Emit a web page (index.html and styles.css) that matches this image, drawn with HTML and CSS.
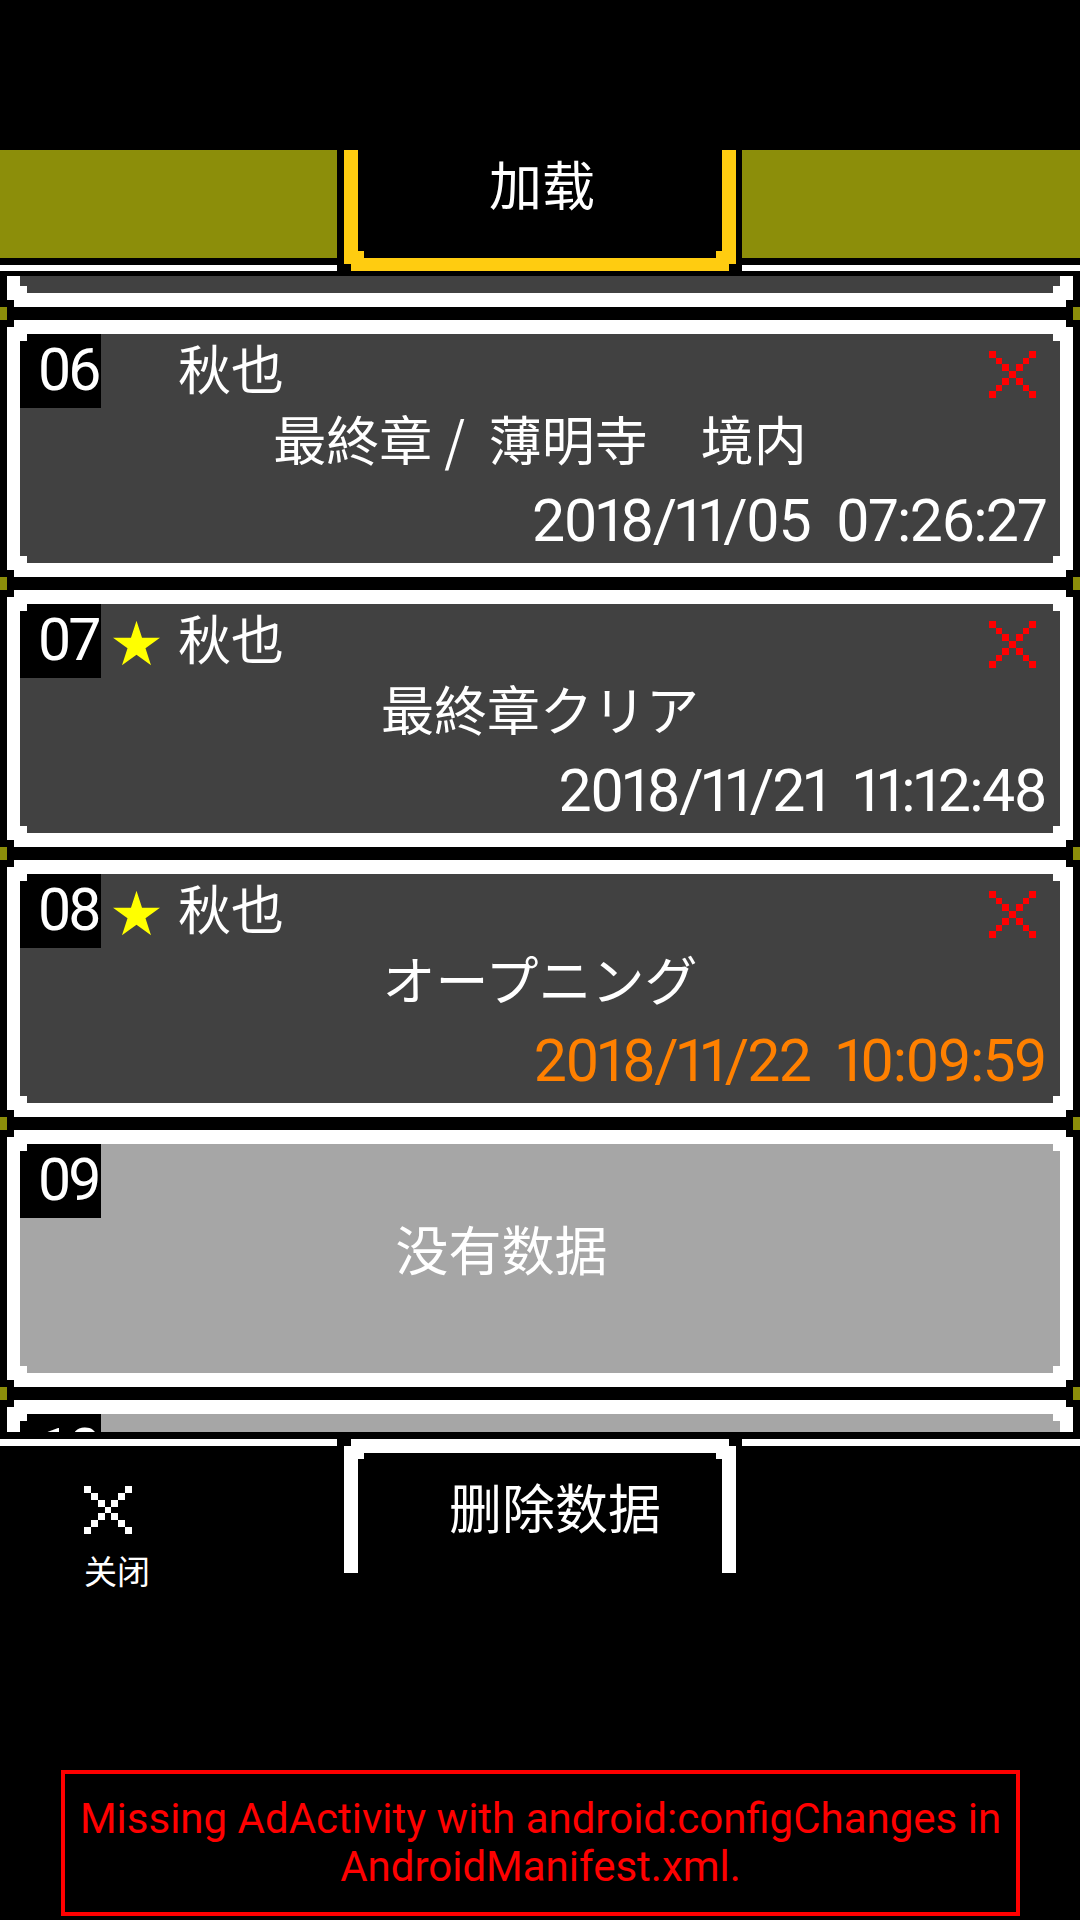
FILE: index.html
```html
<!DOCTYPE html>
<html lang="zh-CN">
<head>
<meta charset="utf-8">
<title>加载</title>
<link rel="stylesheet" href="styles.css">
</head>
<body>
<div class="screen">
  <header class="topbar">
    <div class="side"><div class="olive"></div><div class="rule"></div></div>
    <div class="tab-load"><div class="tab-load-in">加载</div></div>
    <div class="side r"><div class="olive"></div><div class="rule"></div></div>
  </header>

  <main class="viewport">
    <div class="list">
      <div class="card"><div class="slot"></div></div>
      <div class="sep"><i></i><i></i></div>

      <div class="card"><div class="slot">
        <div class="row1">
          <div class="badge">06</div>
          <div class="mark"></div>
          <div class="name">秋也</div>
          <svg class="del" viewBox="0 0 7 7" shape-rendering="crispEdges"><path fill="#ff0000" d="M0 0h1v1H0zM6 0h1v1H6zM1 1h1v1H1zM5 1h1v1H5zM2 2h1v1H2zM4 2h1v1H4zM3 3h1v1H3zM2 4h1v1H2zM4 4h1v1H4zM1 5h1v1H1zM5 5h1v1H5zM0 6h1v1H0zM6 6h1v1H6z"/></svg>
        </div>
        <div class="title">最終章 /  薄明寺　境内</div>
        <div class="date">2018/11/05  07:26:27</div>
      </div></div>
      <div class="sep"><i></i><i></i></div>

      <div class="card"><div class="slot">
        <div class="row1">
          <div class="badge">07</div>
          <div class="mark"><svg class="star" viewBox="0 0 100 95"><polygon fill="#ffff00" points="50,0 61.8,36.3 100,36.3 69.1,58.8 80.9,95 50,72.6 19.1,95 30.9,58.8 0,36.3 38.2,36.3"/></svg></div>
          <div class="name">秋也</div>
          <svg class="del" viewBox="0 0 7 7" shape-rendering="crispEdges"><path fill="#ff0000" d="M0 0h1v1H0zM6 0h1v1H6zM1 1h1v1H1zM5 1h1v1H5zM2 2h1v1H2zM4 2h1v1H4zM3 3h1v1H3zM2 4h1v1H2zM4 4h1v1H4zM1 5h1v1H1zM5 5h1v1H5zM0 6h1v1H0zM6 6h1v1H6z"/></svg>
        </div>
        <div class="title">最終章クリア</div>
        <div class="date">2018/11/21  11:12:48</div>
      </div></div>
      <div class="sep"><i></i><i></i></div>

      <div class="card"><div class="slot">
        <div class="row1">
          <div class="badge">08</div>
          <div class="mark"><svg class="star" viewBox="0 0 100 95"><polygon fill="#ffff00" points="50,0 61.8,36.3 100,36.3 69.1,58.8 80.9,95 50,72.6 19.1,95 30.9,58.8 0,36.3 38.2,36.3"/></svg></div>
          <div class="name">秋也</div>
          <svg class="del" viewBox="0 0 7 7" shape-rendering="crispEdges"><path fill="#ff0000" d="M0 0h1v1H0zM6 0h1v1H6zM1 1h1v1H1zM5 1h1v1H5zM2 2h1v1H2zM4 2h1v1H4zM3 3h1v1H3zM2 4h1v1H2zM4 4h1v1H4zM1 5h1v1H1zM5 5h1v1H5zM0 6h1v1H0zM6 6h1v1H6z"/></svg>
        </div>
        <div class="title">オープニング</div>
        <div class="date recent">2018/11/22  10:09:59</div>
      </div></div>
      <div class="sep"><i></i><i></i></div>

      <div class="card"><div class="slot empty">
        <div class="row1"><div class="badge">09</div></div>
        <div class="title">没有数据</div>
      </div></div>
      <div class="sep"><i></i><i></i></div>

      <div class="card"><div class="slot empty">
        <div class="row1"><div class="badge">10</div></div>
      </div></div>
    </div>
  </main>

  <footer class="bottombar">
    <div class="side">
      <div class="rule"></div>
      <div class="close">
        <svg class="close-icon" viewBox="0 0 7 7" shape-rendering="crispEdges"><path fill="#ffffff" d="M0 0h1v1H0zM6 0h1v1H6zM1 1h1v1H1zM5 1h1v1H5zM2 2h1v1H2zM4 2h1v1H4zM3 3h1v1H3zM2 4h1v1H2zM4 4h1v1H4zM1 5h1v1H1zM5 5h1v1H5zM0 6h1v1H0zM6 6h1v1H6z"/></svg>
        <span class="close-label">关闭</span>
      </div>
    </div>
    <div class="tab-del"><div class="tab-del-in">删除数据</div></div>
    <div class="side r"><div class="rule"></div></div>
  </footer>

  <div class="ad-error">Missing AdActivity with android:configChanges in<br>AndroidManifest.xml.</div>
</div>
</body>
</html>
```

FILE: styles.css
```css
html, body {
  margin: 0;
  padding: 0;
  background: #000;
}

.screen {
  width: 1080px;
  height: 1920px;
  overflow: hidden;
  background: #000;
  padding-top: 150px;
  box-sizing: border-box;
  font-family: "Noto Sans CJK SC", "Noto Sans CJK JP", sans-serif;
  color: #fff;
}

/* ---------- top bar ---------- */
.topbar {
  display: flex;
  height: 121px;
}

.side {
  width: 337px;
  flex: none;
  display: flex;
  flex-direction: column;
}
.side.r { width: 338px; }

.olive {
  height: 108px;
  background: #8c8e0a;
}

.topbar .rule {
  margin-top: 7px;
  height: 6px;
  background: #fff;
}

.tab-load {
  width: 392px;
  flex: none;
  margin: 0 6px 0 7px;
  height: 121px;
  background: #ffcc10;
  padding: 0 14px 13px;
  box-sizing: border-box;
  clip-path: polygon(0 0, 100% 0, 100% calc(100% - 7px), calc(100% - 7px) calc(100% - 7px), calc(100% - 7px) 100%, 7px 100%, 7px calc(100% - 7px), 0 calc(100% - 7px));
}

.tab-load-in {
  height: 100%;
  background: #000;
  clip-path: polygon(0 0, 100% 0, 100% calc(100% - 7px), calc(100% - 6px) calc(100% - 7px), calc(100% - 6px) 100%, 6px 100%, 6px calc(100% - 7px), 0 calc(100% - 7px));
  text-align: center;
  font-size: 53px;
  line-height: 66px;
  padding-left: 4px;
  box-sizing: border-box;
}

/* ---------- list ---------- */
.viewport {
  height: 1156px;
  margin-top: 5px;
  overflow: hidden;
}

.list {
  margin-top: -226px;
  display: flex;
  flex-direction: column;
}

.card {
  flex: none;
  height: 257px;
  margin: 0 7px;
  background: #fff;
  padding: 14px 13px;
  box-sizing: border-box;
  clip-path: polygon(7px 0, calc(100% - 7px) 0, calc(100% - 7px) 7px, 100% 7px, 100% calc(100% - 7px), calc(100% - 7px) calc(100% - 7px), calc(100% - 7px) 100%, 7px 100%, 7px calc(100% - 7px), 0 calc(100% - 7px), 0 7px, 7px 7px);
}

.sep {
  flex: none;
  height: 13px;
  display: flex;
  justify-content: space-between;
}
.sep i {
  width: 7px;
  background: #8c8e0a;
}

.slot {
  height: 229px;
  background: #414141;
  display: flex;
  flex-direction: column;
  clip-path: polygon(7px 0, calc(100% - 7px) 0, calc(100% - 7px) 7px, 100% 7px, 100% calc(100% - 7px), calc(100% - 7px) calc(100% - 7px), calc(100% - 7px) 100%, 7px 100%, 7px calc(100% - 7px), 0 calc(100% - 7px), 0 7px, 7px 7px);
}
.slot.empty { background: #a6a6a6; }

.row1 {
  display: flex;
  height: 74px;
  flex: none;
  align-items: flex-start;
}

.badge {
  flex: none;
  width: 81px;
  height: 74px;
  background: #000;
  color: #fff;
  font-family: Roboto, sans-serif;
  font-size: 59px;
  line-height: 72px;
  letter-spacing: -3px;
  padding-left: 18px;
  box-sizing: border-box;
  white-space: nowrap;
}

.mark {
  flex: none;
  width: 77px;
  height: 74px;
}

.star {
  display: block;
  width: 47px;
  height: 46px;
  margin: 16px 0 0 12px;
}

.name {
  font-size: 53px;
  line-height: 66px;
  white-space: nowrap;
}

.del {
  flex: none;
  display: block;
  width: 47px;
  height: 47px;
  margin: 17px 24px 0 auto;
}

.title {
  flex: none;
  height: 60px;
  line-height: 60px;
  font-size: 53px;
  text-align: center;
  white-space: pre;
}
.empty .title { padding-right: 77px; }

.date {
  padding: 18px 14px 0 0;
  line-height: 69px;
  font-family: Roboto, sans-serif;
  font-size: 59px;
  letter-spacing: -1.7px;
  font-variant-numeric: proportional-nums;
  text-align: right;
  white-space: pre;
}
.date.recent { color: #ff8000; }

/* ---------- bottom bar ---------- */
.bottombar {
  display: flex;
  height: 134px;
  margin-top: 7px;
  align-items: flex-start;
}

.bottombar .rule {
  height: 7px;
  background: #fff;
}

.close {
  margin: 40px 0 0 84px;
  display: flex;
  flex-direction: column;
  align-items: flex-start;
}

.close-icon {
  display: block;
  width: 48px;
  height: 48px;
}

.close-label {
  margin-top: 20px;
  font-size: 33px;
  line-height: 33px;
}

.tab-del {
  width: 392px;
  flex: none;
  margin: 0 6px 0 7px;
  height: 134px;
  background: #fff;
  padding: 14px 14px 0;
  box-sizing: border-box;
  clip-path: polygon(7px 0, calc(100% - 7px) 0, calc(100% - 7px) 7px, 100% 7px, 100% 100%, 0 100%, 0 7px, 7px 7px);
}

.tab-del-in {
  height: 100%;
  background: #000;
  clip-path: polygon(6px 0, calc(100% - 6px) 0, calc(100% - 6px) 6px, 100% 6px, 100% 100%, 0 100%, 0 6px, 6px 6px);
  text-align: center;
  font-size: 53px;
  line-height: 66px;
  padding: 20px 0 0 30px;
  box-sizing: border-box;
}

/* ---------- ad error ---------- */
.ad-error {
  margin: 197px 60px 0 61px;
  height: 146px;
  box-sizing: border-box;
  border: 4px solid #ff0000;
  display: flex;
  align-items: center;
  justify-content: center;
  text-align: center;
  color: #ff0000;
  font-family: Roboto, sans-serif;
  font-size: 42px;
  line-height: 48px;
}
```
